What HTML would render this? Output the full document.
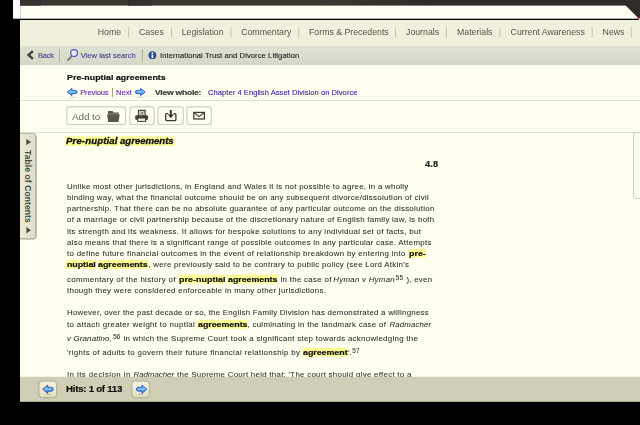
<!DOCTYPE html><html><head><meta charset="utf-8"><title>Pre-nuptial agreements</title><style>
html,body{margin:0;padding:0;}
body{width:640px;height:425px;overflow:hidden;background:#000;position:relative;font-family:"Liberation Sans",sans-serif;}
.a{position:absolute;}
.t{position:absolute;white-space:nowrap;line-height:1;}
#tx{position:absolute;left:0;top:0;width:640px;height:425px;will-change:transform;}
.hl{position:absolute;background:#ffff99;}
</style></head><body>
<svg class="a" style="left:0;top:0" width="640" height="21" viewBox="0 0 640 21"><defs><linearGradient id="gt" x1="0" y1="0" x2="1" y2="0"><stop offset="0.5" stop-color="#3b3733"/><stop offset="0.66" stop-color="#2f2b28"/></linearGradient></defs><rect x="13" y="0" width="7.2" height="19" fill="#fff"/><rect x="20.2" y="0" width="620" height="19" fill="#fffff3"/><rect x="20.2" y="0" width="620" height="5.6" fill="url(#gt)"/><rect x="20.2" y="0" width="20" height="5.6" fill="#35312e"/><rect x="128.5" y="0" width="22.5" height="5.6" fill="#35312e"/><rect x="39.7" y="0" width="0.8" height="5.6" fill="#2b2724"/><rect x="128" y="0" width="0.8" height="5.6" fill="#2b2724"/><rect x="150.8" y="0" width="0.8" height="5.6" fill="#2b2724"/><polygon points="625.2,5 640,5 640,18.2 638.4,18.2" fill="#2f2b28"/><rect x="13" y="18.7" width="625.8" height="1.5" fill="#000"/><rect x="637.6" y="17.2" width="1.8" height="1.6" fill="#d01818"/><rect x="638.8" y="18.7" width="2" height="2" fill="#f1f0dd"/></svg>
<div class="a" style="left:20px;top:20px;width:620px;height:383px;background:#fffff0"></div>
<div class="a" style="left:20px;top:20px;width:620px;height:25.75px;background:#f1f0dd"></div>
<div class="a" style="left:20px;top:45.75px;width:620px;height:19px;background:linear-gradient(#e0e3d3,#d6dac9 85%,#ced3c3)"></div>
<svg class="a" style="left:126px;top:26px" width="6" height="13" viewBox="126 26 6 13"><rect x="128.0" y="27.3" width="1.2" height="10" fill="#cbcab6"/></svg>
<svg class="a" style="left:169px;top:26px" width="6" height="13" viewBox="169 26 6 13"><rect x="170.9" y="27.3" width="1.2" height="10" fill="#cbcab6"/></svg>
<svg class="a" style="left:229px;top:26px" width="6" height="13" viewBox="229 26 6 13"><rect x="230.4" y="27.3" width="1.2" height="10" fill="#cbcab6"/></svg>
<svg class="a" style="left:296px;top:26px" width="6" height="13" viewBox="296 26 6 13"><rect x="298.09999999999997" y="27.3" width="1.2" height="10" fill="#cbcab6"/></svg>
<svg class="a" style="left:393px;top:26px" width="6" height="13" viewBox="393 26 6 13"><rect x="395.0" y="27.3" width="1.2" height="10" fill="#cbcab6"/></svg>
<svg class="a" style="left:444px;top:26px" width="6" height="13" viewBox="444 26 6 13"><rect x="445.79999999999995" y="27.3" width="1.2" height="10" fill="#cbcab6"/></svg>
<svg class="a" style="left:497px;top:26px" width="6" height="13" viewBox="497 26 6 13"><rect x="499.2" y="27.3" width="1.2" height="10" fill="#cbcab6"/></svg>
<svg class="a" style="left:590px;top:26px" width="6" height="13" viewBox="590 26 6 13"><rect x="591.6" y="27.3" width="1.2" height="10" fill="#cbcab6"/></svg>
<svg class="a" style="left:629px;top:26px" width="6" height="13" viewBox="629 26 6 13"><rect x="630.6999999999999" y="27.3" width="1.2" height="10" fill="#cbcab6"/></svg>
<div class="a" style="left:59.0px;top:49px;width:1px;height:13px;background:#b4b4a2"></div>
<div class="a" style="left:142.0px;top:49px;width:1px;height:13px;background:#b4b4a2"></div>
<div class="a" style="left:20px;top:100px;width:620px;height:1px;background:#e2e2d2"></div>
<div class="a" style="left:20px;top:132px;width:620px;height:1px;background:#e2e2d2"></div>
<!-- back chevron -->
<svg class="a" style="left:24.4px;top:48px" width="14" height="14" viewBox="0 0 14 14"><polyline points="8.9,3.1 4.5,7 8.9,10.9" fill="none" stroke="#4d473b" stroke-width="2.5" stroke-linejoin="miter"/></svg>
<!-- magnifier -->
<svg class="a" style="left:65px;top:47px" width="16" height="16" viewBox="65 47 16 16"><line x1="71.3" y1="56.6" x2="68.1" y2="60" stroke="#857e6e" stroke-width="2.1" stroke-linecap="round"/><circle cx="74.1" cy="53.1" r="3.45" fill="#e4e4f3" stroke="#5b59c6" stroke-width="1.25"/><circle cx="73.3" cy="52.3" r="1.3" fill="#fafaff" opacity=".8"/></svg>
<!-- info -->
<svg class="a" style="left:147px;top:50px" width="11" height="11" viewBox="0 0 11 11"><circle cx="5.4" cy="5.2" r="3.9" fill="#2c4d90"/><circle cx="5.4" cy="3.2" r="0.9" fill="#fff"/><rect x="4.6" y="4.6" width="1.6" height="3.4" fill="#fff"/></svg>
<!-- prev / next arrows -->
<svg class="a" style="left:0;top:0" width="1" height="1"><defs><linearGradient id="ga" x1="0" y1="0" x2="0" y2="1"><stop offset="0" stop-color="#7dbcf3"/><stop offset="1" stop-color="#3b80e0"/></linearGradient><g id="arw"><path d="M2.2,2.5 L5.7,2.5 L5.7,0.4 L10.5,4.3 L5.7,8.2 L5.7,6.1 L2.2,6.1 A1.8,1.8 0 0 1 2.2,2.5 Z" fill="url(#ga)" stroke="#2a5ec6" stroke-width=".9" stroke-linejoin="round"/><path d="M2.6,4.2 L8.3,4.2" stroke="#c4e4ff" stroke-width=".9" stroke-linecap="round" opacity=".85"/></g></defs></svg>
<svg class="a" style="left:66px;top:87.6px" width="12" height="10" viewBox="0 0 12 10"><ellipse cx="6.5" cy="9.2" rx="3.4" ry="0.6" fill="#b7b59c" opacity=".6"/><use href="#arw" transform="translate(11.5,0) scale(-0.97,0.93)"/></svg>
<svg class="a" style="left:134.6px;top:87.6px" width="12" height="10" viewBox="0 0 12 10"><ellipse cx="5.2" cy="9.2" rx="3.4" ry="0.6" fill="#b7b59c" opacity=".6"/><use href="#arw" transform="scale(0.97,0.93)"/></svg>
<div class="a" style="left:112px;top:88px;width:1px;height:9px;background:#a09e8e"></div>
<!-- toolbar buttons -->
<svg class="a" style="left:60px;top:100px" width="160" height="32" viewBox="60 100 160 32"><g fill="#fefef3" stroke="#d0d0bb" stroke-width="1.15"><rect x="66.8" y="106.9" width="58.7" height="17.6" rx="2.6"/><rect x="129.9" y="106.9" width="24.3" height="17.6" rx="2.6"/><rect x="158" y="106.9" width="25.2" height="17.6" rx="2.6"/><rect x="186.9" y="106.9" width="24.5" height="17.6" rx="2.6"/></g></svg>
<!-- folder -->
<svg class="a" style="left:106px;top:109.5px" width="15" height="13" viewBox="0 0 15 13"><path d="M2,1.1 L6.6,1.1 L7.4,2.4 L12.6,2.4 L12.6,4.6 L2,4.6 Z" fill="#5b574b"/><path d="M1.1,4.3 L13.7,4.3 L12.5,11.9 L2.2,11.9 Z" fill="#5b574b"/><path d="M2.2,3.6 L12.4,3.6" stroke="#8a8678" stroke-width=".6"/></svg>
<!-- print -->
<svg class="a" style="left:132px;top:107px" width="20" height="17" viewBox="132 107 20 17"><rect x="138.4" y="110.3" width="6.7" height="6" fill="#d2d0c3" stroke="#3f3b32" stroke-width="1.1"/><rect x="140.7" y="112" width="2.6" height="2.4" fill="#8f8c7e"/><rect x="135.2" y="115.2" width="12.9" height="4.7" rx="1.3" fill="#47433a"/><rect x="137.7" y="118" width="7.9" height="3.4" fill="#f1f0e2" stroke="#3f3b32" stroke-width="1"/></svg>
<!-- download -->
<svg class="a" style="left:163px;top:108.4px" width="16" height="15" viewBox="0 0 16 15"><path d="M5.2,5.7 L3.6,5.7 Q2.7,5.7 2.7,6.6 L2.7,11.6 Q2.7,12.6 3.6,12.6 L12,12.6 Q12.9,12.6 12.9,11.6 L12.9,6.6 Q12.9,5.7 12,5.7 L10.4,5.7" fill="none" stroke="#3c382f" stroke-width="1.3"/><path d="M6.8,1.9 L8.8,1.9 L8.8,6.6 L10.9,6.6 L7.8,10.3 L4.7,6.6 L6.8,6.6 Z" fill="#3c382f"/></svg>
<!-- mail -->
<svg class="a" style="left:191px;top:109px" width="16" height="13" viewBox="0 0 16 13"><rect x="2.8" y="3.4" width="10.6" height="6.6" fill="#f6f5e6" stroke="#3c382f" stroke-width="1.2"/><polyline points="3,3.6 8.1,7.6 13.2,3.6" fill="none" stroke="#3c382f" stroke-width="1.2"/></svg>
<!-- TOC tab -->
<div class="a" style="left:20px;top:133.4px;width:15px;height:104px;background:linear-gradient(90deg,#ebebda,#deddc9);border:1px solid #b9b8a6;border-left:none;border-radius:0 3.5px 3.5px 0;box-shadow:0.6px 0.6px 0 #9c9b8a"></div>
<svg class="a" style="left:25px;top:138px" width="8" height="8" viewBox="0 0 8 8"><polygon points="1.4,1 6,4 1.4,7" fill="#4b4a40"/></svg>
<svg class="a" style="left:25px;top:225.5px" width="8" height="8" viewBox="0 0 8 8"><polygon points="1.4,1 5.8,4.3 1.4,7.6" fill="#4b4a40"/></svg>
<div class="a" id="toc" style="left:24.6px;top:149.9px;width:0;height:0"><span style="position:absolute;left:0;top:0;transform-origin:0 0;transform:rotate(90deg) translateY(-100%);white-space:nowrap;font-size:8.5px;line-height:1;font-weight:bold;color:#4d4c42;letter-spacing:.1px;display:block;height:7px;padding-top:0">Table of Contents</span></div>
<!-- right box -->
<div class="a" style="left:633px;top:132.4px;width:12px;height:65px;border:1px solid #cfcfbb;border-radius:3px;background:#fbfbec"></div>

<svg class="a" style="left:0;top:0" width="640" height="425" viewBox="0 0 640 425"><g fill="#ffff97">
<rect x="65.8" y="136.40" width="52.60" height="9.60"/>
<rect x="119.7" y="136.40" width="54.50" height="9.60"/>
<rect x="408.4" y="248.80" width="17.60" height="8.90"/>
<rect x="65.9" y="259.95" width="30.00" height="8.90"/>
<rect x="97.8" y="259.95" width="50.60" height="8.90"/>
<rect x="178.6" y="274.70" width="47.00" height="8.90"/>
<rect x="227.4" y="274.70" width="50.10" height="8.90"/>
<rect x="197.5" y="319.80" width="50.00" height="8.90"/>
<rect x="302.5" y="347.80" width="45.00" height="8.90"/>
</g></svg>
<div id="tx">
<span class="t" id="t0" style="left:97.75px;top:28.35px;font-size:8.75px;letter-spacing:0.000px;color:#555548;">Home</span>
<span class="t" id="t1" style="left:139px;top:28.35px;font-size:8.75px;letter-spacing:0.000px;color:#555548;">Cases</span>
<span class="t" id="t2" style="left:181.75px;top:28.35px;font-size:8.75px;letter-spacing:0.000px;color:#555548;">Legislation</span>
<span class="t" id="t3" style="left:241.2px;top:28.35px;font-size:8.75px;letter-spacing:0.000px;color:#555548;">Commentary</span>
<span class="t" id="t4" style="left:309px;top:28.35px;font-size:8.75px;letter-spacing:0.000px;color:#555548;">Forms &amp; Precedents</span>
<span class="t" id="t5" style="left:406px;top:28.35px;font-size:8.75px;letter-spacing:0.000px;color:#555548;">Journals</span>
<span class="t" id="t6" style="left:457px;top:28.35px;font-size:8.75px;letter-spacing:0.000px;color:#555548;">Materials</span>
<span class="t" id="t7" style="left:510.6px;top:28.35px;font-size:8.75px;letter-spacing:0.000px;color:#555548;">Current Awareness</span>
<span class="t" id="t8" style="left:602.6px;top:28.35px;font-size:8.75px;letter-spacing:0.000px;color:#555548;">News</span>
<span class="t" id="t9" style="left:38px;top:51.51px;font-size:7.6px;letter-spacing:-0.254px;color:#45458c;-webkit-text-stroke:0.12px #45458c;">Back</span>
<span class="t" id="t10" style="left:80.75px;top:51.51px;font-size:7.6px;letter-spacing:-0.010px;color:#45458c;-webkit-text-stroke:0.12px #45458c;">View last search</span>
<span class="t" id="t11" style="left:160px;top:51.51px;font-size:7.6px;letter-spacing:0.080px;color:#1e1e1e;-webkit-text-stroke:0.12px #1e1e1e;">International Trust and Divorce Litigation</span>
<span class="t" id="t12" style="left:66.75px;top:73.50px;font-size:7.8px;letter-spacing:0.033px;transform-origin:0 50%;transform:scaleX(1.13);font-weight:bold;color:#111;-webkit-text-stroke:0.2px #111;">Pre-nuptial agreements</span>
<span class="t" id="t13" style="left:80.2px;top:88.61px;font-size:7.6px;letter-spacing:-0.166px;color:#6a2cb0;-webkit-text-stroke:0.12px #6a2cb0;">Previous</span>
<span class="t" id="t14" style="left:116px;top:88.61px;font-size:7.6px;letter-spacing:-0.007px;color:#6a2cb0;-webkit-text-stroke:0.12px #6a2cb0;">Next</span>
<span class="t" id="t15" style="left:155px;top:88.61px;font-size:7.6px;letter-spacing:-0.228px;transform-origin:0 50%;transform:scaleX(1.13);font-weight:bold;color:#3c3c3c;-webkit-text-stroke:0.2px #3c3c3c;">View whole:</span>
<span class="t" id="t16" style="left:208px;top:88.61px;font-size:7.6px;letter-spacing:0.032px;color:#4324a8;-webkit-text-stroke:0.12px #4324a8;">Chapter 4 English Asset Division on Divorce</span>
<span class="t" id="t17" style="left:72.1px;top:112.31px;font-size:9.9px;letter-spacing:-0.075px;color:#6b6b60;">Add to</span>
<span class="t" id="t18" style="left:66.3px;top:136.61px;font-size:8.5px;letter-spacing:0.111px;transform-origin:0 50%;transform:scaleX(1.13);font-weight:bold;font-style:italic;color:#111;-webkit-text-stroke:0.3px #111;">Pre-nuptial</span>
<span class="t" id="t19" style="left:120.3px;top:136.61px;font-size:8.5px;letter-spacing:-0.021px;transform-origin:0 50%;transform:scaleX(1.13);font-weight:bold;font-style:italic;color:#111;-webkit-text-stroke:0.3px #111;">agreements</span>
<span class="t" id="t20" style="left:425px;top:160.50px;font-size:8.2px;letter-spacing:0.081px;transform-origin:0 50%;transform:scaleX(1.13);font-weight:bold;color:#222;-webkit-text-stroke:0.2px #222;">4.8</span>
<span class="t" id="t21" style="left:67px;top:183.00px;font-size:7.9px;letter-spacing:0.268px;color:#2e2e2e;-webkit-text-stroke:0.07px #2e2e2e;">Unlike most other jurisdictions, in England and Wales it is not possible to agree, in a wholly</span>
<span class="t" id="t22" style="left:67px;top:194.15px;font-size:7.9px;letter-spacing:0.278px;color:#2e2e2e;-webkit-text-stroke:0.07px #2e2e2e;">binding way, what the financial outcome should be on any subsequent divorce/dissolution of civil</span>
<span class="t" id="t23" style="left:67px;top:205.31px;font-size:7.9px;letter-spacing:0.277px;color:#2e2e2e;-webkit-text-stroke:0.07px #2e2e2e;">partnership. That there can be no absolute guarantee of any particular outcome on the dissolution</span>
<span class="t" id="t24" style="left:67px;top:216.45px;font-size:7.9px;letter-spacing:0.282px;color:#2e2e2e;-webkit-text-stroke:0.07px #2e2e2e;">of a marriage or civil partnership because of the discretionary nature of English family law, is both</span>
<span class="t" id="t25" style="left:67px;top:227.61px;font-size:7.9px;letter-spacing:0.293px;color:#2e2e2e;-webkit-text-stroke:0.07px #2e2e2e;">its strength and its weakness. It allows for bespoke solutions to any individual set of facts, but</span>
<span class="t" id="t26" style="left:67px;top:238.75px;font-size:7.9px;letter-spacing:0.270px;color:#2e2e2e;-webkit-text-stroke:0.07px #2e2e2e;">also means that there is a significant range of possible outcomes in any particular case. Attempts</span>
<span class="t" id="t27" style="left:67px;top:249.90px;font-size:7.9px;letter-spacing:0.299px;color:#2e2e2e;-webkit-text-stroke:0.07px #2e2e2e;">to define future financial outcomes in the event of relationship breakdown by entering into</span>
<span class="t" id="t28" style="left:408.8px;top:249.91px;font-size:8.1px;letter-spacing:-0.007px;transform-origin:0 50%;transform:scaleX(1.1);font-weight:bold;color:#111;-webkit-text-stroke:0.2px #111;">pre-</span>
<span class="t" id="t29" style="left:66.5px;top:261.05px;font-size:8.1px;letter-spacing:-0.068px;transform-origin:0 50%;transform:scaleX(1.1);font-weight:bold;color:#111;-webkit-text-stroke:0.2px #111;">nuptial</span>
<span class="t" id="t30" style="left:98.4px;top:261.05px;font-size:8.1px;letter-spacing:-0.036px;transform-origin:0 50%;transform:scaleX(1.1);font-weight:bold;color:#111;-webkit-text-stroke:0.2px #111;">agreements</span>
<span class="t" id="t31" style="left:148.4px;top:261.06px;font-size:7.9px;letter-spacing:0.283px;color:#2e2e2e;-webkit-text-stroke:0.07px #2e2e2e;">, were previously said to be contrary to public policy (see Lord Atkin's</span>
<span class="t" id="t32" style="left:67px;top:275.81px;font-size:7.9px;letter-spacing:0.325px;color:#2e2e2e;-webkit-text-stroke:0.07px #2e2e2e;">commentary of the history of</span>
<span class="t" id="t33" style="left:178.8px;top:275.80px;font-size:8.1px;letter-spacing:0.042px;transform-origin:0 50%;transform:scaleX(1.1);font-weight:bold;color:#111;-webkit-text-stroke:0.2px #111;">pre-nuptial</span>
<span class="t" id="t34" style="left:227.9px;top:275.80px;font-size:8.1px;letter-spacing:-0.065px;transform-origin:0 50%;transform:scaleX(1.1);font-weight:bold;color:#111;-webkit-text-stroke:0.2px #111;">agreements</span>
<span class="t" id="t35" style="left:280.5px;top:275.81px;font-size:7.9px;letter-spacing:0.301px;color:#2e2e2e;-webkit-text-stroke:0.07px #2e2e2e;">in the case of</span>
<span class="t" id="t36" style="left:333.3px;top:275.81px;font-size:7.9px;letter-spacing:0.254px;font-style:italic;color:#2e2e2e;-webkit-text-stroke:0.05px #2e2e2e;">Hyman v Hyman</span>
<span class="t" id="t37" style="left:395.8px;top:274.82px;font-size:6.4px;letter-spacing:0.060px;color:#2e2e2e;-webkit-text-stroke:0.07px #2e2e2e;">55</span>
<span class="t" id="t38" style="left:406.5px;top:275.81px;font-size:7.9px;letter-spacing:0.242px;color:#2e2e2e;-webkit-text-stroke:0.07px #2e2e2e;">), even</span>
<span class="t" id="t39" style="left:67px;top:287.00px;font-size:7.9px;letter-spacing:0.276px;color:#2e2e2e;-webkit-text-stroke:0.07px #2e2e2e;">though they were considered enforceable in many other jurisdictions.</span>
<span class="t" id="t40" style="left:67px;top:309.40px;font-size:7.9px;letter-spacing:0.236px;color:#2e2e2e;-webkit-text-stroke:0.07px #2e2e2e;">However, over the past decade or so, the English Family Division has demonstrated a willingness</span>
<span class="t" id="t41" style="left:67px;top:320.90px;font-size:7.9px;letter-spacing:0.328px;color:#2e2e2e;-webkit-text-stroke:0.07px #2e2e2e;">to attach greater weight to nuptial</span>
<span class="t" id="t42" style="left:197.7px;top:320.91px;font-size:8.1px;letter-spacing:-0.046px;transform-origin:0 50%;transform:scaleX(1.1);font-weight:bold;color:#111;-webkit-text-stroke:0.2px #111;">agreements</span>
<span class="t" id="t43" style="left:247.5px;top:320.90px;font-size:7.9px;letter-spacing:0.286px;color:#2e2e2e;-webkit-text-stroke:0.07px #2e2e2e;">, culminating in the landmark case of</span>
<span class="t" id="t44" style="left:389.5px;top:320.90px;font-size:7.9px;letter-spacing:0.112px;font-style:italic;color:#2e2e2e;-webkit-text-stroke:0.05px #2e2e2e;">Radmacher</span>
<span class="t" id="t45" style="left:67px;top:335.00px;font-size:7.9px;letter-spacing:0.158px;font-style:italic;color:#2e2e2e;-webkit-text-stroke:0.05px #2e2e2e;">v Granatino,</span>
<span class="t" id="t46" style="left:113.3px;top:333.62px;font-size:6.4px;letter-spacing:-0.206px;color:#2e2e2e;-webkit-text-stroke:0.07px #2e2e2e;">56</span>
<span class="t" id="t47" style="left:123.5px;top:335.00px;font-size:7.9px;letter-spacing:0.287px;color:#2e2e2e;-webkit-text-stroke:0.07px #2e2e2e;">in which the Supreme Court took a significant step towards acknowledging the</span>
<span class="t" id="t48" style="left:67px;top:348.90px;font-size:7.9px;letter-spacing:0.320px;color:#2e2e2e;-webkit-text-stroke:0.07px #2e2e2e;">'rights of adults to govern their future financial relationship by</span>
<span class="t" id="t49" style="left:302.7px;top:348.91px;font-size:8.1px;letter-spacing:-0.046px;transform-origin:0 50%;transform:scaleX(1.1);font-weight:bold;color:#111;-webkit-text-stroke:0.2px #111;">agreement</span>
<span class="t" id="t50" style="left:348.1px;top:348.90px;font-size:7.9px;letter-spacing:-0.202px;color:#2e2e2e;-webkit-text-stroke:0.07px #2e2e2e;">'.</span>
<span class="t" id="t51" style="left:352.3px;top:347.51px;font-size:6.4px;letter-spacing:0.194px;color:#2e2e2e;-webkit-text-stroke:0.07px #2e2e2e;">57</span>
<span class="t" id="t52" style="left:67px;top:370.90px;font-size:7.9px;letter-spacing:0.421px;color:#2e2e2e;-webkit-text-stroke:0.07px #2e2e2e;">In its decision in</span>
<span class="t" id="t53" style="left:133.5px;top:370.90px;font-size:7.9px;letter-spacing:-0.035px;font-style:italic;color:#2e2e2e;-webkit-text-stroke:0.05px #2e2e2e;">Radmacher</span>
<span class="t" id="t54" style="left:177px;top:370.90px;font-size:7.9px;letter-spacing:0.277px;color:#2e2e2e;-webkit-text-stroke:0.07px #2e2e2e;">the Supreme Court held that: 'The court should give effect to a</span>
</div>
<svg class="a" style="left:20px;top:375px" width="620" height="28" viewBox="20 375 620 28"><rect x="20" y="376.75" width="620" height="25.1" fill="#d0ceb5"/></svg>
<svg class="a" style="left:30px;top:376px" width="130" height="26" viewBox="30 376 130 26"><defs><linearGradient id="gb" x1="0" y1="0" x2="0" y2="1"><stop offset="0" stop-color="#f6f4de"/><stop offset="1" stop-color="#e2dfbf"/></linearGradient></defs>
<g fill="url(#gb)" stroke="#b0ae93" stroke-width="1"><rect x="39" y="381.1" width="17.6" height="16.4" rx="3.4"/><rect x="131.9" y="381.1" width="17.4" height="16.4" rx="3.4"/></g>
<g fill="none" stroke="#c4c2a8" stroke-width="1" opacity=".55"><rect x="38.1" y="380.2" width="19.4" height="18.2" rx="4.2"/><rect x="131" y="380.2" width="19.2" height="18.2" rx="4.2"/></g>
<ellipse cx="48.5" cy="394.3" rx="3.3" ry="0.6" fill="#a5a388" opacity=".6"/><ellipse cx="140.8" cy="394.3" rx="3.3" ry="0.6" fill="#a5a388" opacity=".6"/>
<use href="#arw" transform="translate(53.6,384.6) scale(-1.03,1.08)"/>
<use href="#arw" transform="translate(136,384.6) scale(1.03,1.08)"/>
</svg>

<div id="tx2" style="position:absolute;left:0;top:0;width:640px;height:425px;will-change:transform">
<span class="t" id="t55" style="left:66.25px;top:384.75px;font-size:8.6px;letter-spacing:-0.240px;transform-origin:0 50%;transform:scaleX(1.13);font-weight:bold;color:#111;-webkit-text-stroke:0.2px #111;">Hits: 1 of 113</span>
</div>
<svg class="a" style="left:0;top:400px" width="640" height="25" viewBox="0 400 640 25"><rect x="0" y="401.8" width="640" height="24" fill="#000"/></svg>
</body></html>
